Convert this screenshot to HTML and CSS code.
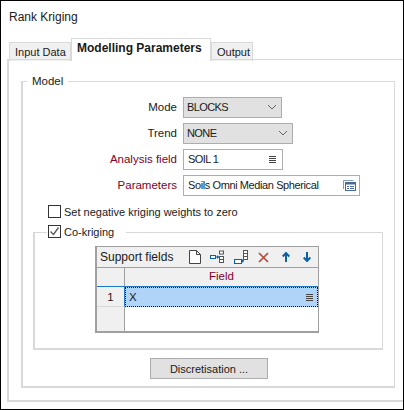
FILE: index.html
```html
<!DOCTYPE html>
<html lang="en">
<head>
  <meta charset="UTF-8">
  <title>Rank Kriging</title>
  <link rel="stylesheet" href="styles.css">
</head>
<body>
  <div class="window">
    <div class="title">Rank Kriging</div>

    <!-- Tabs -->
    <div class="tabs">
      <div class="tab">Input Data</div>
      <div class="tab active">Modelling Parameters</div>
      <div class="tab">Output</div>
    </div>

    <div class="pane">
      <fieldset class="group model">
        <legend>Model</legend>

        <div class="form-row">
          <label>Mode</label>
          <div class="combo combo-mode">BLOCKS
            <svg width="10" height="6" viewBox="0 0 10 6"><path d="M1 1l4 4 4-4" fill="none" stroke="#666"/></svg>
          </div>
        </div>
        <div class="form-row">
          <label>Trend</label>
          <div class="combo combo-trend">NONE
            <svg width="10" height="6" viewBox="0 0 10 6"><path d="M1 1l4 4 4-4" fill="none" stroke="#666"/></svg>
          </div>
        </div>
        <div class="form-row">
          <label class="required">Analysis field</label>
          <div class="field field-analysis">SOIL 1
            <svg width="7" height="7" viewBox="0 0 7 7"><path d="M0 .5h7M0 2.5h7M0 4.5h7M0 6.5h7" stroke="#444"/></svg>
          </div>
        </div>
        <div class="form-row">
          <label class="required">Parameters</label>
          <div class="field field-params">Soils Omni Median Spherical
            <svg width="13" height="11" viewBox="0 0 13 11">
              <path d="M.5 9v-8.500h10" fill="none" stroke="#7f9db9"/>
              <rect x="2.500" y="2.500" width="10" height="8" fill="#fff" stroke="#4a6a96"/>
              <path d="M2.500 3.500h10" stroke="#4a6a96" stroke-width="2"/>
              <path d="M4 6.500h2M7 6.500h4M4 8.500h2M7 8.500h4" stroke="#4a6a96"/>
            </svg>
          </div>
        </div>

        <div class="check-row">
          <span class="check"></span>Set negative kriging weights to zero
        </div>

        <fieldset class="group cokriging">
          <legend>
            <span class="check">
              <svg width="11" height="11" viewBox="0 0 11 11"><path d="M1.500 5.500l3 3 5-7" fill="none" stroke="#555" stroke-width="1.300"/></svg>
            </span>Co-kriging
          </legend>

          <div class="grid">
            <div class="toolbar">
              <span class="toolbar-title">Support fields</span>
              <div class="tools">
                <svg width="12" height="14" viewBox="0 0 12 14"><path d="M.5.5h7l4 4v9h-11zM7.500.5v4h4" fill="#fff" stroke="#444"/></svg>
                <svg width="14" height="14" viewBox="0 0 14 14"><rect x=".5" y="5.500" width="5" height="3" fill="#fff" stroke="#0b62a8"/><path d="M5 7h4" stroke="#0b62a8"/><path d="M7 5l2 2-2 2z" fill="#0b62a8"/><rect x="9.500" y="1" width="4" height="3" fill="#fff" stroke="#555"/><rect x="9.500" y="6.500" width="4" height="6" fill="#fff" stroke="#555"/><path d="M9.500 9.500h4" stroke="#555"/></svg>
                <svg class="tool-wide" width="14" height="14" viewBox="0 0 14 14"><rect x=".5" y="9.500" width="7" height="4" fill="#fff" stroke="#0b62a8"/><path d="M7 11h3" stroke="#0b62a8"/><path d="M8 9l2 2-2 2z" fill="#0b62a8"/><rect x="9.500" y=".5" width="4" height="9" fill="#fff" stroke="#555"/><path d="M9.500 3.500h4M9.500 6.500h4" stroke="#555"/></svg>
                <svg class="tool-wide" width="11" height="11" viewBox="0 0 11 11"><path d="M1 1l9 9M10 1l-9 9" stroke="#b94a35" stroke-width="1.700"/></svg>
                <svg class="tool-arrow" width="8" height="10" viewBox="0 0 8 10"><path d="M4 10V2M.7 4.500L4 1l3.300 3.500" fill="none" stroke="#0b62a8" stroke-width="2"/></svg>
                <svg class="tool-arrow" width="8" height="10" viewBox="0 0 8 10"><path d="M4 0v8M.7 5.500L4 9l3.300-3.500" fill="none" stroke="#0b62a8" stroke-width="2"/></svg>
              </div>
            </div>
            <div class="grid-head">
              <div class="row-num"></div>
              <div class="col-name">Field</div>
            </div>
            <div class="grid-row">
              <div class="row-num">1</div>
              <div class="cell selected">X
                <svg width="7" height="7" viewBox="0 0 7 7"><path d="M0 .5h7M0 2.500h7M0 4.500h7M0 6.500h7" stroke="#444"/></svg>
              </div>
            </div>
            <div class="grid-row grid-empty">
              <div class="row-num"></div>
              <div class="cell"></div>
            </div>
          </div>
        </fieldset>

        <div class="actions">
          <button type="button">Discretisation ...</button>
        </div>
      </fieldset>
    </div>
  </div>
</body>
</html>
```

FILE: styles.css
```css
* {
  margin: 0;
  padding: 0;
  box-sizing: border-box;
  font-family: 'Liberation Sans', sans-serif;
}

body {
  background-color: #fff;
  color: #1a1a1a;
  font-size: 11.5px;
  line-height: 16px;
}

.window {
  width: 404px;
  height: 410px;
  border: 1px solid #000;
  padding: 0 0 7px 6px;
  display: flex;
  flex-direction: column;
  overflow: hidden;
}

.title {
  height: 37px;
  padding: 8px 0 0 2px;
  font-size: 12px;
}

/* Tabs */
.tabs {
  display: flex;
  align-items: flex-end;
  padding-left: 2px;
  margin-bottom: -1px;
  white-space: nowrap;
  font-size: 11px;
}

.tab {
  height: 19px;
  padding: 1px 0 0 5px;
  background-color: #f0f0f0;
  border: 1px solid #d9d9d9;
  border-bottom: none;
}

.tab:first-child {
  width: 62px;
}

.tab:last-child {
  width: 42px;
}

.tab.active {
  height: 23px;
  width: 140px;
  padding: 1px 0 0 5px;
  background-color: #fff;
  font-size: 12px;
  font-weight: bold;
  border-width: 1px 1px 0 1px;
  position: relative;
}

.pane {
  flex: 1;
  border: 2px solid #d9d9d9;
  border-width: 1px 0 2px 2px;
  margin-top: -1px;
  padding: 13px 8px 0 12px;
}

/* Group boxes */
.group {
  border: 2px solid #d9d9d9;
  border-width: 1px 1px 2px 2px;
}

.group legend {
  padding: 0 5px;
  margin-left: -6px;
  height: 16px;
}

.model {
  height: 315px;
  padding: 8px 11px 0 10px;
}

/* Form rows */
.form-row {
  display: flex;
  align-items: center;
  height: 20px;
  margin-bottom: 6px;
  white-space: nowrap;
}

.form-row label {
  width: 144px;
  margin-right: 6px;
  text-align: right;
}

.required {
  color: #80002a;
}

.combo, .field {
  display: flex;
  align-items: center;
  justify-content: space-between;
  height: 21px;
  border: 1px solid #adadad;
  padding: 0 6px 0 3px;
  font-size: 11px;
  letter-spacing: -.6px;
}

.combo {
  background-color: #e1e1e1;
  padding-right: 4px;
}

.combo-mode {
  width: 99px;
}

.combo-trend {
  width: 110px;
}

.field {
  background-color: #fff;
  padding-left: 4px;
}

.field-analysis {
  width: 100px;
}

.field-params {
  width: 177px;
  padding-right: 3px;
  letter-spacing: -.4px;
}

/* Checkboxes */
.check-row {
  display: flex;
  align-items: center;
  margin: 9px 0 0 15px;
  height: 16px;
  font-size: 11px;
}

.check {
  display: inline-flex;
  align-items: center;
  justify-content: center;
  width: 13px;
  height: 13px;
  margin-right: 3px;
  border: 1px solid #333;
  background-color: #fff;
  vertical-align: -1px;
}

.check-row .check {
  margin-bottom: 2px;
}

/* Co-kriging group */
.cokriging {
  margin-top: 4px;
  height: 126px;
  padding: 6px 0 0 60px;
}

.cokriging legend {
  padding: 0 12px 0 1px;
  margin-left: -48px;
  font-size: 11px;
}

/* Support fields grid */
.grid {
  width: 224px;
  height: 87px;
  border: 2px solid #a0a0a0;
  border-width: 1px 1px 2px 2px;
  background-color: #fff;
}

.toolbar {
  display: flex;
  align-items: center;
  justify-content: space-between;
  height: 21px;
  padding: 0 7px 0 3px;
  background-color: #f0f0f0;
  border-bottom: 1px solid #a0a0a0;
  font-size: 12px;
}

.tools {
  display: flex;
  align-items: center;
  gap: 9px;
}

.tool-wide {
  margin-left: 1px;
}

.tool-arrow {
  margin-left: 4px;
}

.grid-head, .grid-row {
  display: flex;
}

.grid-head {
  height: 19px;
  background-color: #f0f0f0;
  border-bottom: 1px solid #1979ca;
}

.row-num {
  width: 28px;
  flex-shrink: 0;
  background-color: #f0f0f0;
  border-right: 1px solid #a0a0a0;
  text-align: center;
}

.col-name {
  flex: 1;
  text-align: center;
  color: #80002a;
}

.grid-row {
  height: 20px;
}

.grid-row .row-num {
  border-bottom: 1px solid #d9d9d9;
  line-height: 20px;
}

.grid-head + .grid-row .row-num {
  border-right-color: #1979ca;
}

.grid-empty {
  height: 24px;
}

.grid-empty .row-num {
  border-bottom: none;
}

.cell {
  flex: 1;
}

.cell.selected {
  display: flex;
  align-items: center;
  justify-content: space-between;
  padding: 0 4px 0 3px;
  background-color: #b0d4f8;
  border: 1px dotted #000;
}

/* Button */
.actions {
  display: flex;
  justify-content: center;
  margin-top: 8px;
  padding-left: 2px;
}

button {
  width: 118px;
  height: 21px;
  background-color: #e1e1e1;
  border: 1px solid #adadad;
  font-size: 11px;
  color: #1a1a1a;
}
```
